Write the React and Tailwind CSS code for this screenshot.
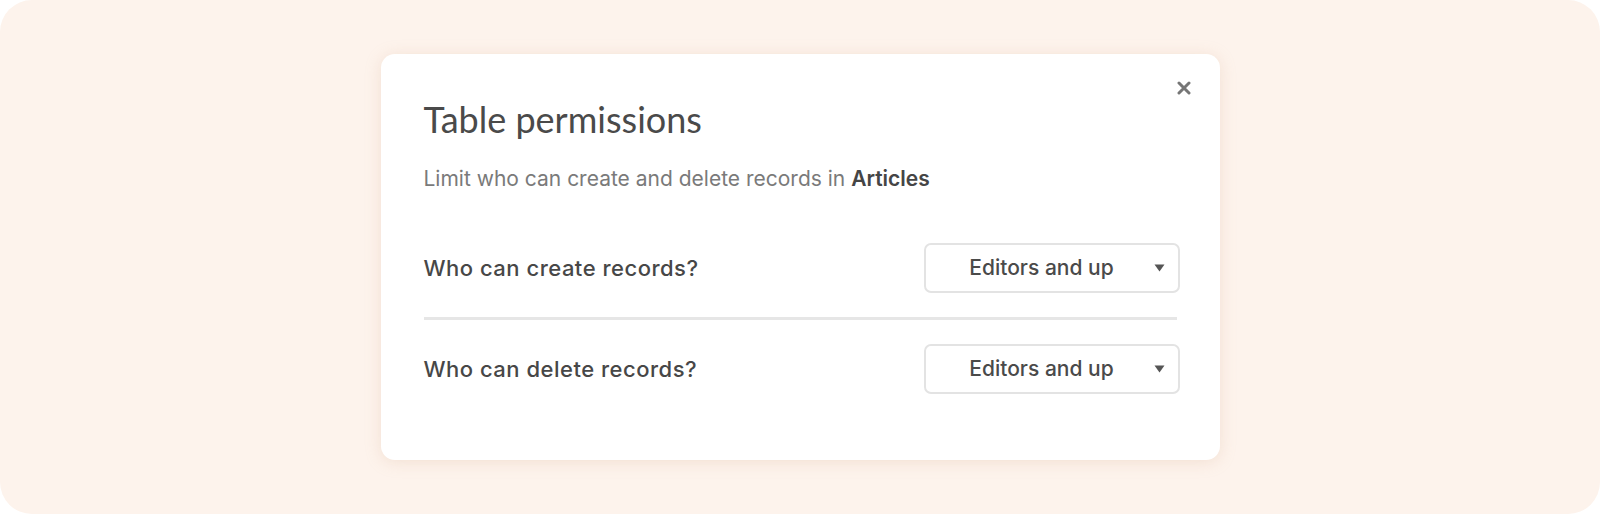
function PermissionRow({ label }) {
  return (
    <div className="flex items-center justify-between h-[50px]">
      <span className="text-[22px] font-medium text-[#474747] tracking-[0.5px]">{label}</span>
      <button className="relative w-[256px] h-[50px] rounded-[7px] border-2 border-[#e3e3e3] bg-white flex items-center justify-center">
        <span className="text-[21px] font-medium text-[#4a4a4a] -ml-[20px]">Editors and up</span>
        <svg className="absolute right-[13px] top-1/2 -translate-y-1/2" width="11" height="8" viewBox="0 0 11 8">
          <path d="M0.5 0.5h10L5.5 7.5z" fill="#555" />
        </svg>
      </button>
    </div>
  );
}

export default function App() {
  return (
    <div className="w-[1600px] h-[514px] bg-white" style={{ fontFamily: "Inter, 'Liberation Sans', sans-serif" }}>
      <div className="h-full rounded-[32px] bg-[#fdf3ec] flex justify-center pt-[54px]">
        <div className="relative w-[839px] h-[406px] bg-white rounded-[14px] shadow-[0_2px_16px_rgba(214,170,140,0.26)] pl-[43px] pr-[40px] pt-[41px]">
          <button className="absolute right-[29px] top-[27px]">
            <svg width="14" height="14" viewBox="0 0 14 14">
              <path d="M2 2L12 12M12 2L2 12" stroke="#767676" strokeWidth="3" strokeLinecap="round" />
            </svg>
          </button>
          <h2 className="text-[36px] leading-[48px] text-[#4a4a4a]" style={{ fontFamily: "Lato, sans-serif" }}>
            Table permissions
          </h2>
          <p className="mt-[22px] text-[21px] leading-[28px] text-[#7a7a7a]">
            Limit who can create and delete records in <span className="font-semibold text-[#454545]">Articles</span>
          </p>
          <div className="mt-[50px]">
            <PermissionRow label="Who can create records?" />
            <div className="my-[24px] mr-[3px] h-[3px] bg-[#e6e6e6]" />
            <PermissionRow label="Who can delete records?" />
          </div>
        </div>
      </div>
    </div>
  );
}
